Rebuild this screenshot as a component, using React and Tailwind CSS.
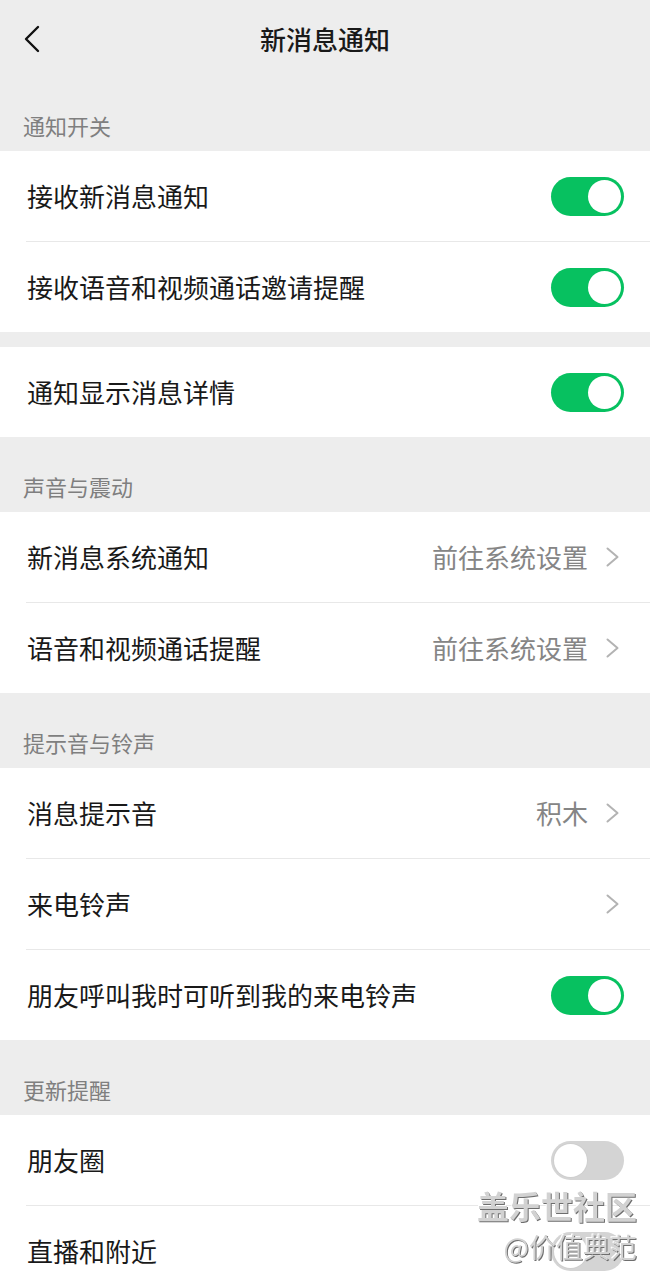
import { Fragment } from "react";

const groups = [
  {
    label: "通知开关",
    first: true,
    rows: [
      { title: "接收新消息通知", toggle: true },
      { title: "接收语音和视频通话邀请提醒", toggle: true },
    ],
  },
  {
    gap: true,
    rows: [{ title: "通知显示消息详情", toggle: true }],
  },
  {
    label: "声音与震动",
    rows: [
      { title: "新消息系统通知", value: "前往系统设置", arrow: true },
      { title: "语音和视频通话提醒", value: "前往系统设置", arrow: true },
    ],
  },
  {
    label: "提示音与铃声",
    rows: [
      { title: "消息提示音", value: "积木", arrow: true },
      { title: "来电铃声", arrow: true },
      { title: "朋友呼叫我时可听到我的来电铃声", toggle: true },
    ],
  },
  {
    label: "更新提醒",
    rows: [
      { title: "朋友圈", toggle: false },
      { title: "直播和附近", toggle: false },
    ],
  },
];

function Switch({ on }) {
  return (
    <div
      className={
        on
          ? "w-[73px] h-[39px] rounded-full bg-[#07c160] p-[3px] flex justify-end"
          : "w-[73px] h-[39px] rounded-full bg-[#d4d4d4] p-[3px] flex justify-start"
      }
    >
      <div
        className={
          on
            ? "w-[33px] h-[33px] rounded-full bg-white"
            : "w-[33px] h-[33px] rounded-full bg-white shadow-[0_0_0_1px_#cfcfcf]"
        }
      />
    </div>
  );
}

function Arrow() {
  return (
    <svg width="14" height="20" viewBox="0 0 14 20" className="ml-[18px] mr-[4px]">
      <polyline
        points="1.5,1.5 11.5,10 1.5,18.5"
        fill="none"
        stroke="#b3b3b3"
        strokeWidth="2"
        strokeLinecap="round"
        strokeLinejoin="round"
      />
    </svg>
  );
}

function Row({ row }) {
  return (
    <div className="h-[90px] flex items-center pl-[27px] pr-[26px] bg-white">
      <span className="flex-1 text-[26px] leading-none text-[#191919]">{row.title}</span>
      {row.value && (
        <span className="text-[26px] leading-none text-[#858585]">{row.value}</span>
      )}
      {row.arrow && <Arrow />}
      {row.toggle !== undefined && <Switch on={row.toggle} />}
    </div>
  );
}

export default function App() {
  return (
    <div
      className="min-h-screen bg-[#ededed]"
      style={{ fontFamily: '"Noto Sans CJK SC", "Noto Sans", sans-serif' }}
    >
      <div className="h-[82px] pb-[5px] grid grid-cols-[80px_1fr_80px] items-center">
        <svg width="16" height="28" viewBox="0 0 16 28" className="ml-[24px]">
          <polyline
            points="14,2 2,14 14,26"
            fill="none"
            stroke="#111"
            strokeWidth="2.4"
            strokeLinecap="round"
            strokeLinejoin="round"
          />
        </svg>
        <h1 className="text-center text-[26px] font-medium text-[#191919]">新消息通知</h1>
        <div />
      </div>

      {groups.map((g, gi) => (
        <Fragment key={gi}>
          {g.label && (
            <div
              className={
                g.first
                  ? "h-[69px] flex items-end pb-[14px] pl-[23px]"
                  : "h-[75px] flex items-end pb-[14px] pl-[23px]"
              }
            >
              <span className="text-[22px] leading-[24px] text-[#7f7f7f]">{g.label}</span>
            </div>
          )}
          {g.gap && <div className="h-[15px]" />}
          <div className="bg-white">
            {g.rows.map((r, ri) => (
              <Fragment key={ri}>
                {ri > 0 && <div className="h-px ml-[26px] bg-[#e8e8e8]" />}
                <Row row={r} />
              </Fragment>
            ))}
          </div>
        </Fragment>
      ))}

      <div className="fixed right-[13px] top-[1188px] flex flex-col items-end pointer-events-none">
        <span className="text-[32px] leading-[34px] font-bold text-[#d2d2d2] [text-shadow:1px_1px_0_#6e6e6e,-1px_-1px_0_#ffffff]">
          盖乐世社区
        </span>
        <span className="mt-[11px] text-[27px] leading-[28px] text-[#d2d2d2] [text-shadow:1px_1px_0_#6e6e6e,-1px_-1px_0_#ffffff]">
          @价值典范
        </span>
      </div>
    </div>
  );
}
